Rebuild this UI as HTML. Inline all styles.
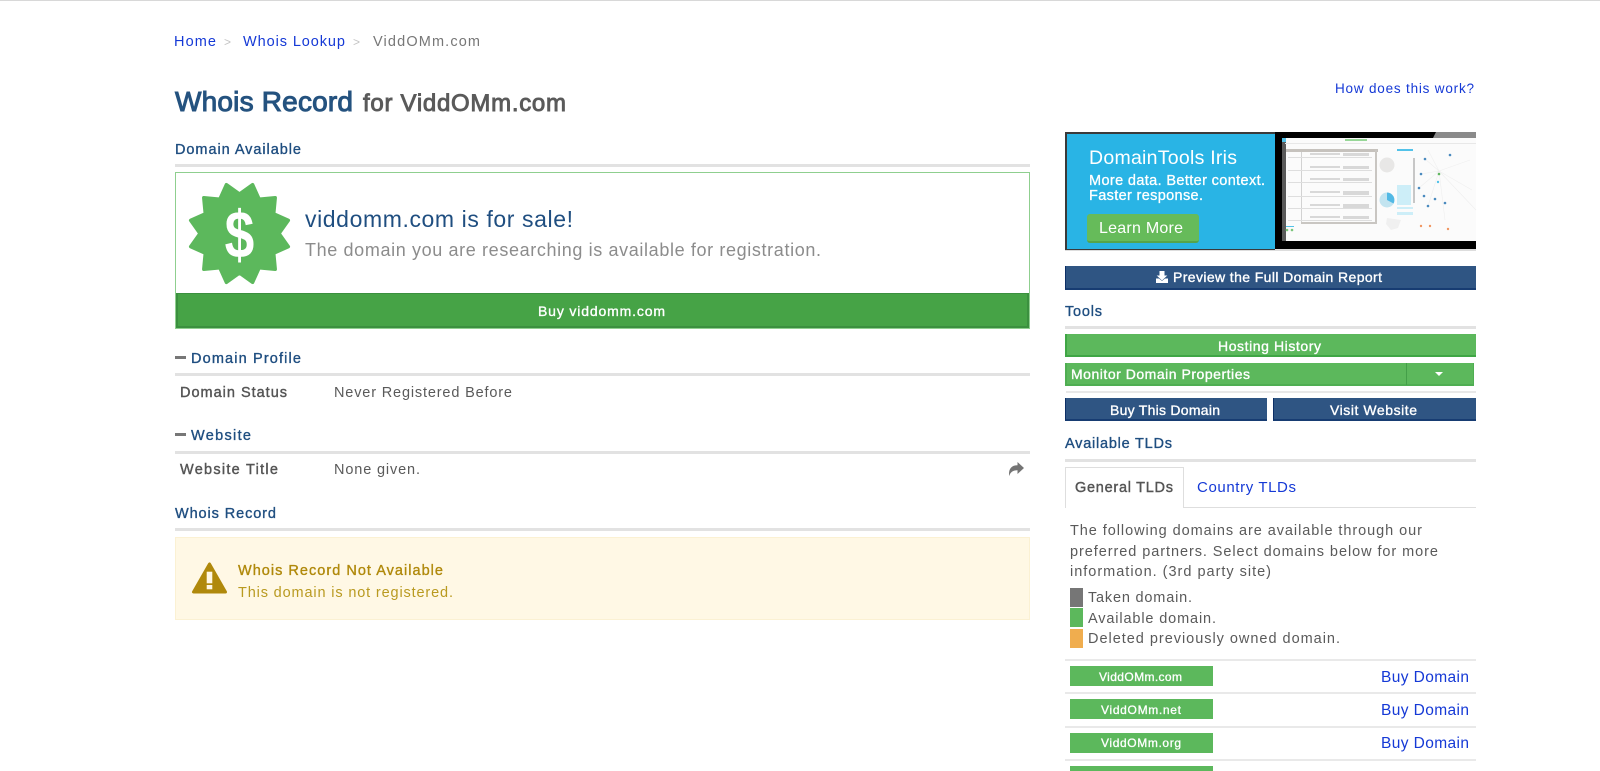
<!DOCTYPE html>
<html lang="en"><head><meta charset="utf-8"><title>Whois Record for ViddOMm.com</title>
<style>
html,body{margin:0;padding:0;width:1600px;height:771px;overflow:hidden;background:#fff}
#p{position:relative;width:1600px;height:771px;overflow:hidden;filter:blur(.35px)}
#p div{position:absolute;box-sizing:border-box}
.r{left:175px;width:855px;height:3px;background:#e2e2e2}
.s{left:1065px;width:411px;height:3px;background:#e2e2e2}
.t{left:1065px;width:411px;height:2px;background:#e9e9e9}
.g{background:#5cb85c;border-left:2px solid #3fa645;border-bottom:2px solid #3fa645}
.b{background:#2f5583;border-left:1px solid #0d2f66;border-bottom:2px solid #173c72}
.pill{left:1070px;width:143px;height:20px;background:#5cb85c}
svg{position:absolute;left:0;top:0}
text{font-family:"Liberation Sans",sans-serif;font-size:14.5px;white-space:pre}
.h{fill:#1f4e80;stroke:#1f4e80;stroke-width:.35px;font-size:14.5px}
.l{fill:#1539d6}
.d{fill:#5a5a5a}
.db{fill:#555;stroke:#555;stroke-width:.4px;font-size:14.5px}
.w{fill:#fff;stroke:#fff;stroke-width:.35px;font-size:14px}
.m{fill:#fff;stroke:#fff;stroke-width:.3px;font-size:12px}
.be{fill:#fff}
</style></head><body><div id="p">
<div style="left:0;top:0;width:1600px;height:1px;background:#d8d8d8"></div>

<div class="r" style="top:164px"></div>
<div style="left:175px;top:172px;width:855px;height:157px;border:1px solid #8fcf8f"></div>
<div style="left:176px;top:293px;width:853px;height:35px;background:#46a346;border:2px solid #3b903f;border-top-width:1px"></div>
<div class="r" style="top:373px"></div>
<div class="r" style="top:451px"></div>
<div class="r" style="top:528px"></div>
<div style="left:175px;top:537px;width:855px;height:83px;background:#fff8e5;border:1px solid #fbf1d3"></div>
<div style="left:175px;top:356px;width:11px;height:3px;background:#777"></div>
<div style="left:175px;top:433px;width:11px;height:3px;background:#777"></div>

<!-- banner -->
<div style="left:1065px;top:132px;width:411px;height:119px;background:#000;border-bottom:2px solid #ddd"></div>
<div style="left:1065px;top:132px;width:210px;height:118px;background:#29b4e5;border:2px solid #3a3a3a;border-right:0;border-bottom-width:1px"></div>
<div style="left:1282px;top:138px;width:194px;height:103px;background:#fbfbfb"></div>
<div style="left:1087px;top:214px;width:112px;height:29px;background:#66bb5a;border-radius:3px;border-bottom:2px solid #55a44c"></div>

<div class="b" style="left:1065px;top:266px;width:411px;height:24px"></div>
<div class="s" style="top:326px"></div>
<div class="g" style="left:1065px;top:334px;width:411px;height:23px"></div>
<div class="g" style="left:1065px;top:363px;width:409px;height:23px;border-color:#4fae52;border-right:1px solid #4fae52"></div>
<div style="left:1406px;top:363px;width:1px;height:22px;background:#449f49"></div>
<div style="left:1066px;top:391px;width:410px;height:2px;background:#e8e8e8"></div>
<div class="b" style="left:1065px;top:398px;width:202px;height:23px"></div>
<div class="b" style="left:1273px;top:398px;width:203px;height:23px"></div>
<div class="s" style="top:459px"></div>
<div style="left:1065px;top:507px;width:411px;height:1px;background:#dedede"></div>
<div style="left:1065px;top:467px;width:119px;height:41px;background:#fff;border:1px solid #dedede;border-bottom:0"></div>

<div style="left:1070px;top:588px;width:13px;height:19px;background:#767676"></div>
<div style="left:1070px;top:608px;width:13px;height:19px;background:#5cb85c"></div>
<div style="left:1070px;top:629px;width:13px;height:19px;background:#f0ad4e"></div>

<div class="t" style="top:659px"></div>
<div class="t" style="top:692px"></div>
<div class="t" style="top:726px"></div>
<div class="t" style="top:759px"></div>
<div class="pill" style="top:666px"></div>
<div class="pill" style="top:699px"></div>
<div class="pill" style="top:733px"></div>
<div class="pill" style="top:766px"></div>

<svg width="1600" height="771" viewBox="0 0 1600 771">
<text class="l" x="174" y="46" textLength="42" lengthAdjust="spacing">Home</text>
<text x="224" y="46" fill="#c4c4c4" style="font-size:12px">&gt;</text>
<text class="l" x="243" y="46" textLength="102" lengthAdjust="spacing">Whois Lookup</text>
<text x="353" y="46" fill="#c4c4c4" style="font-size:12px">&gt;</text>
<text x="373" y="46" fill="#777" textLength="107" lengthAdjust="spacing">ViddOMm.com</text>
<text x="175" y="111" fill="#24527f" style="font-size:28px;stroke:#24527f;stroke-width:1px" textLength="178" lengthAdjust="spacing">Whois Record</text>
<text x="363" y="111" fill="#5a5a5a" style="font-size:24px;stroke:#5a5a5a;stroke-width:.9px" textLength="203" lengthAdjust="spacing">for ViddOMm.com</text>
<text class="l" x="1335" y="93" style="font-size:13.500px" textLength="139" lengthAdjust="spacing">How does this work?</text>
<text class="h" x="175" y="154" textLength="126" lengthAdjust="spacing">Domain Available</text>

<!-- badge -->
<g transform="translate(239.500 233.500)">
<path fill="#5cb85c" stroke="#5cb85c" stroke-width="3.500" stroke-linejoin="round" d="M39.500 0L48.800 13.100 34.200 19.700 35.700 35.700 19.700 34.200 13.100 48.800 0 39.500-13.100 48.800-19.700 34.200-35.700 35.700-34.200 19.700-48.800 13.100-39.500 0-48.800-13.100-34.200-19.700-35.700-35.700-19.700-34.200-13.100-48.800 0-39.500 13.100-48.800 19.700-34.200 35.700-35.700 34.200-19.700 48.800-13.100Z"/>
<text transform="translate(0 24) scale(.86 1.08)" x="0" y="0" text-anchor="middle" fill="#fff" style="font-size:62px;font-weight:700">$</text>
</g>
<text x="305" y="227" fill="#1f4e80" style="font-size:23px" textLength="268" lengthAdjust="spacing">viddomm.com is for sale!</text>
<text x="305" y="256" fill="#8c8c8c" style="font-size:18px" textLength="516" lengthAdjust="spacing">The domain you are researching is available for registration.</text>
<text class="w" x="538" y="316" textLength="127" lengthAdjust="spacing">Buy viddomm.com</text>

<text class="h" x="191" y="363" textLength="110" lengthAdjust="spacing">Domain Profile</text>
<text class="db" x="180" y="397" textLength="107" lengthAdjust="spacing">Domain Status</text>
<text class="d" x="334" y="397" textLength="178" lengthAdjust="spacing">Never Registered Before</text>
<text class="h" x="191" y="440" textLength="60" lengthAdjust="spacing">Website</text>
<text class="db" x="180" y="474" textLength="98" lengthAdjust="spacing">Website Title</text>
<text class="d" x="334" y="474" textLength="86" lengthAdjust="spacing">None given.</text>
<path fill="#747474" d="M1024 468l-6.500-6v3.300c-5.500 0-8.500 3-8.500 8.700 0 .8.100 1.500.3 2 1-3.600 3.300-5.700 8.200-5.700v3.700z"/>
<text class="h" x="175" y="518" textLength="101" lengthAdjust="spacing">Whois Record</text>

<path fill="#b0890b" stroke="#b0890b" stroke-width="3" stroke-linejoin="round" d="M209.500 564L193.500 592h32z"/>
<rect x="206.700" y="571.700" width="5.600" height="11.600" fill="#fff8e5"/>
<rect x="206.700" y="585" width="5.600" height="4.300" fill="#fff8e5"/>
<text x="238" y="575" fill="#b0890b" stroke="#b0890b" stroke-width=".35" style="font-size:14.500px" textLength="205" lengthAdjust="spacing">Whois Record Not Available</text>
<text x="238" y="597" fill="#b99a20" textLength="215" lengthAdjust="spacing">This domain is not registered.</text>

<!-- banner text -->
<text class="be" x="1089" y="164" style="font-size:19.500px" textLength="148" lengthAdjust="spacing">DomainTools Iris</text>
<text class="be" x="1089" y="185" stroke="#fff" stroke-width=".3" style="font-size:14.500px" textLength="176" lengthAdjust="spacing">More data. Better context.</text>
<text class="be" x="1089" y="200" stroke="#fff" stroke-width=".3" style="font-size:14.500px" textLength="114" lengthAdjust="spacing">Faster response.</text>
<text class="be" x="1099" y="233" style="font-size:16px" textLength="84" lengthAdjust="spacing">Learn More</text>

<!-- mini app screenshot -->
<path d="M1433 138l3-6h40v6z" fill="#8a8a8a"/>
<g opacity=".8">
<rect x="1282" y="138" width="4" height="4" fill="#29b4e5"/>
<rect x="1282" y="142" width="4" height="99" fill="#333"/>
<rect x="1285" y="143" width="191" height="1" fill="#e4e4e4"/>
<rect x="1345" y="139" width="22" height="2" fill="#7fcf7f"/>
<rect x="1286" y="149" width="92" height="3" fill="#b9b5ae"/>
<rect x="1375" y="150" width="2" height="72" fill="#bdbab4"/>
<rect x="1301" y="152" width="1" height="70" fill="#c8c8c8"/>
<rect x="1301" y="222" width="76" height="2" fill="#bdbab4"/>
<g fill="#d8d8d8">
<rect x="1288" y="157" width="84" height="1"/><rect x="1288" y="170" width="84" height="1"/><rect x="1288" y="182" width="84" height="1"/><rect x="1288" y="196" width="84" height="1"/><rect x="1288" y="208" width="84" height="1"/><rect x="1288" y="220" width="84" height="1"/>
</g>
<g fill="#d0d0d0">
<rect x="1310" y="153" width="30" height="2"/><rect x="1343" y="153" width="26" height="3"/>
<rect x="1310" y="166" width="30" height="2"/><rect x="1343" y="166" width="26" height="3"/>
<rect x="1310" y="178" width="30" height="2"/><rect x="1343" y="178" width="26" height="3"/>
<rect x="1310" y="191" width="30" height="2"/><rect x="1343" y="191" width="26" height="4"/>
<rect x="1310" y="204" width="30" height="2"/><rect x="1343" y="204" width="26" height="4"/>
<rect x="1310" y="216" width="30" height="2"/><rect x="1343" y="216" width="26" height="3"/>
</g>
<circle cx="1387" cy="165" r="7.500" fill="#e4e3e1"/>
<circle cx="1387" cy="200" r="7.500" fill="#b5dfee"/>
<path d="M1387 200v-7.500a7.500 7.500 0 0 1 6.500 11z" fill="#29a9e0"/>
<rect x="1397" y="149" width="16" height="2" fill="#29b4e5"/>
<g fill="#c2ebf8"><rect x="1397" y="185" width="14" height="20"/><rect x="1397" y="207" width="16" height="2"/><rect x="1397" y="212" width="16" height="3"/></g>
<rect x="1413" y="158" width="2" height="45" fill="#bbb"/>
<g stroke="#ececec" stroke-width=".6"><path d="M1439 171L1425 159M1439 171L1421 174M1439 171L1419 188M1439 171L1428 206M1439 171L1445 220M1439 171L1470 160M1439 171L1472 190M1439 171L1476 210M1439 171L1428 150"/></g>
<g fill="#1f6fb0"><circle cx="1425" cy="159" r="1.300"/><circle cx="1421" cy="174" r="1.300"/><circle cx="1419" cy="188" r="1.300"/><circle cx="1424" cy="196" r="1.300"/><circle cx="1428" cy="206" r="1.300"/><circle cx="1435" cy="199" r="1.300"/><circle cx="1445" cy="203" r="1.300"/><circle cx="1450" cy="155" r="1.300"/></g>
<circle cx="1439" cy="174" r="1.300" fill="#3aa53a"/><circle cx="1438" cy="182" r="1.200" fill="#29b4e5"/>
<g fill="#ee7d3b"><circle cx="1421" cy="226" r="1.200"/><circle cx="1430" cy="226" r="1.200"/><circle cx="1448" cy="229" r="1.200"/></g>
<rect x="1286" y="226" width="8" height="1" fill="#29b4e5"/><circle cx="1287" cy="230" r="1.300" fill="#5cb85c"/><circle cx="1292" cy="230" r="1.300" fill="#5cb85c"/>
<path d="M1387 218l14 2-3 8-7 2-5-6z" fill="#eee"/>
</g>

<!-- download icon -->
<path fill="#fff" d="M1159.500 271h5v4.500h2.800l-5.300 5-5.300-5h2.800zM1156 278.500h3l3 2.500 3-2.500h3v4.500h-12z"/>
<text class="w" x="1173" y="282" textLength="209" lengthAdjust="spacing">Preview the Full Domain Report</text>
<text class="h" x="1065" y="316" textLength="37" lengthAdjust="spacing">Tools</text>
<text class="w" x="1218" y="351" textLength="103" lengthAdjust="spacing">Hosting History</text>
<text class="w" x="1071" y="379" textLength="179" lengthAdjust="spacing">Monitor Domain Properties</text>
<path fill="#fff" d="M1435 372h8l-4 4z"/>
<text class="w" x="1110" y="415" textLength="110" lengthAdjust="spacing">Buy This Domain</text>
<text class="w" x="1330" y="415" textLength="87" lengthAdjust="spacing">Visit Website</text>
<text class="h" x="1065" y="448" textLength="107" lengthAdjust="spacing">Available TLDs</text>
<text class="db" x="1075" y="492" textLength="98" lengthAdjust="spacing">General TLDs</text>
<text class="l" x="1197" y="492" style="font-size:15px" textLength="99" lengthAdjust="spacing">Country TLDs</text>

<text class="d" x="1070" y="535" textLength="352" lengthAdjust="spacing">The following domains are available through our</text>
<text class="d" x="1070" y="556" textLength="368" lengthAdjust="spacing">preferred partners. Select domains below for more</text>
<text class="d" x="1070" y="576" textLength="201" lengthAdjust="spacing">information. (3rd party site)</text>
<text class="d" x="1088" y="602" textLength="104" lengthAdjust="spacing">Taken domain.</text>
<text class="d" x="1088" y="623" textLength="128" lengthAdjust="spacing">Available domain.</text>
<text class="d" x="1088" y="643" textLength="252" lengthAdjust="spacing">Deleted previously owned domain.</text>

<text class="m" x="1099" y="681" textLength="83" lengthAdjust="spacing">ViddOMm.com</text>
<text class="m" x="1101" y="714" textLength="80" lengthAdjust="spacing">ViddOMm.net</text>
<text class="m" x="1101" y="747" textLength="80" lengthAdjust="spacing">ViddOMm.org</text>
<text class="l" x="1381" y="682" style="font-size:15.500px" textLength="88" lengthAdjust="spacing">Buy Domain</text>
<text class="l" x="1381" y="715" style="font-size:15.500px" textLength="88" lengthAdjust="spacing">Buy Domain</text>
<text class="l" x="1381" y="748" style="font-size:15.500px" textLength="88" lengthAdjust="spacing">Buy Domain</text>
<text class="l" x="1381" y="783" style="font-size:15.500px" textLength="88" lengthAdjust="spacing">Buy Domain</text>
</svg>
</div></body></html>
